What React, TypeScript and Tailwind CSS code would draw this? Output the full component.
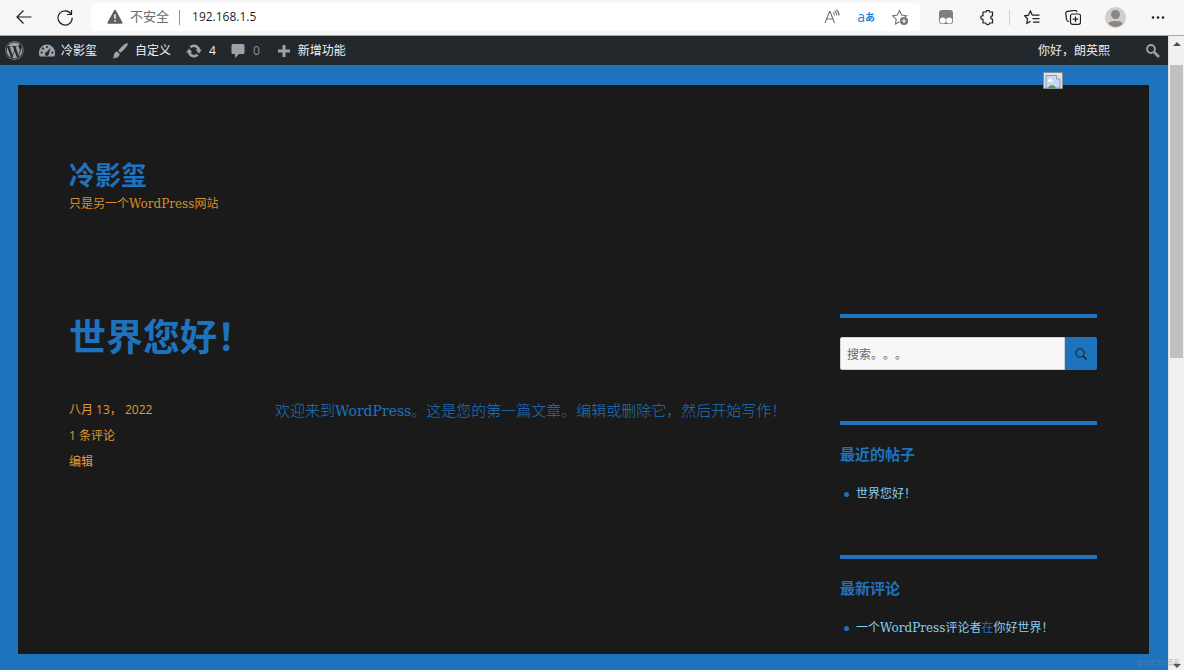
import type { ReactNode } from "react";
import { FaWordpress } from "react-icons/fa";

const post = "世界您好！";

function ToolButton({ label, className = "", children }: { label: string; className?: string; children: ReactNode }) {
  return (
    <button type="button" aria-label={label} className={`flex items-center justify-center ${className}`}>
      {children}
    </button>
  );
}

function BrowserBar() {
  return (
    <div className="flex h-9 items-center border-b border-[#a8a8a8] bg-[#f7f7f7] font-['Open_Sans','Noto_Sans_CJK_SC',sans-serif] text-[#1f1f1f]">
      <div className="flex w-[91px] shrink-0 items-center gap-[25px] pl-4">
        <ToolButton label="返回">
          <svg className="size-4" viewBox="0 0 16 16" fill="none" stroke="currentColor" strokeWidth="1.2">
            <path d="M15.500 7H1M7.500.500 1 7 7.500 13.500" />
          </svg>
        </ToolButton>
        <ToolButton label="刷新">
          <svg className="size-4" viewBox="0 0 16 16" fill="none" stroke="currentColor" strokeWidth="1.200">
            <path d="M14.200 4.300A7.100 7.100 0 1 0 15.200 7.800M14.500 0v4.500H10" />
          </svg>
        </ToolButton>
      </div>
      <div className="mb-px flex h-7 min-w-0 flex-1 items-center rounded bg-white pl-4 pr-3">
        <svg className="size-4 text-[#606060]" viewBox="0 0 16 16" fill="currentColor">
          <path d="M8 .8c.5 0 .8.300 1 .7l6.400 11.700c.4.800-.1 1.500-.9 1.500h-13c-.8 0-1.300-.7-.9-1.500L7 1.500c.2-.4.500-.7 1-.7Z" />
          <path d="M8 5.300v4.500M8 11.300v1.500" stroke="white" strokeWidth="1.400" />
        </svg>
        <span className="ml-[7px] text-[13px] text-[#6b6b6b]">不安全</span>
        <span className="mr-3 ml-2.5 h-[15px] w-px bg-[#949494]" />
        <input aria-label="地址" defaultValue="192.168.1.5" className="min-w-0 flex-1 bg-transparent text-[12px] outline-none" />
        <div className="flex items-center gap-[17px] text-[#707070]">
          <ToolButton label="大声朗读">
            <svg className="size-4" viewBox="0 0 16 16" fill="none" stroke="currentColor" strokeWidth="1.100">
              <path d="M1 14 5.500 2.500h.6L10.500 14M2.600 10h6.300M9 3.500c1 .7 1.500 1.800 1.500 3M10.500 1.800c1.700 1.100 2.300 2.700 2.300 4.700M12.300.8c2 1.500 2.700 3.500 2.700 5.700" />
            </svg>
          </ToolButton>
          <ToolButton label="翻译" className="text-[#1683d8]"><span className="text-[14px] leading-4">a</span><span className="text-[10px] leading-4 font-bold">あ</span></ToolButton>
          <ToolButton label="收藏此页">
            <svg className="size-4" viewBox="0 0 16 16" fill="none" stroke="currentColor" strokeWidth="1.100">
              <path d="m7.500 12.800-4 2.200.7-4.800L.7 6.800l4.700-.7L7.500 1.500l2.100 4.600 5 .7-2 1.500" />
              <circle cx="12" cy="12" r="4" fill="currentColor" stroke="none" />
              <path d="M12 9.800v4.400M9.800 12h4.400" stroke="white" />
            </svg>
          </ToolButton>
        </div>
      </div>
      <div className="flex shrink-0 items-center pl-[18px] pr-[19px]">
        <ToolButton label="扩展">
          <svg className="size-4" viewBox="0 0 16 16">
            <rect x="1" y="0" width="14" height="14" rx="3" fill="#808080" />
            <circle cx="4.800" cy="10.500" r="3" fill="white" />
            <circle cx="11.200" cy="10.500" r="3" fill="white" />
          </svg>
        </ToolButton>
        <ToolButton label="扩展菜单" className="ml-[25px]">
          <svg className="size-4" viewBox="0 0 16 16" fill="none" stroke="currentColor" strokeWidth="1.200" strokeLinejoin="round">
            <path d="M4 2h3c0-2.300 3.500-2.300 3.500 0h3v3.800c-2.400 0-2.400 3.400 0 3.400v3.800h-3c0 2.500-3.500 2.500-3.500 0H4V9.300c-3 0-3-3.600 0-3.600Z" />
          </svg>
        </ToolButton>
        <span className="mx-3.5 h-[15px] w-px bg-[#cfcfcf]" />
        <ToolButton label="收藏夹">
          <svg className="size-4" viewBox="0 0 16 16" fill="none" stroke="currentColor" strokeWidth="1.200">
            <path d="M9 5.200 8.200 5 6.400 1 4.500 5.200.7 5.800l2.800 3-.7 4.500 3.800-2M9 5.200h6.500M8.500 8.700h7M9 12.200h6.500" />
          </svg>
        </ToolButton>
        <ToolButton label="集锦" className="ml-[25px]">
          <svg className="size-4" viewBox="0 0 16 16" fill="none" stroke="currentColor" strokeWidth="1.200">
            <path d="M4 11.500c-1.500 0-2.200-.8-2.400-2L.8 3.700C.6 2.400 1.200 1.500 2.500 1.300l7-.9c1.300-.2 2.200.5 2.400 1.700" />
            <rect x="5.500" y="4" width="10" height="10.300" rx="2" />
            <path d="M10.500 6.500v5.400M7.800 9.200h5.400" />
          </svg>
        </ToolButton>
        <ToolButton label="个人资料" className="ml-6">
          <svg className="size-[21px]" viewBox="0 0 21 21">
            <circle cx="10.500" cy="10.500" r="10.500" fill="#d1cecb" />
            <circle cx="10.500" cy="7.500" r="4.500" fill="#8b8684" />
            <path d="M3.500 16.500c1-3.200 13-3.200 14 0-3.500 4.500-10.500 4.500-14 0Z" fill="#8b8684" />
          </svg>
        </ToolButton>
        <ToolButton label="更多" className="ml-[25px]">
          <svg className="h-4 w-3.5" viewBox="0 0 14 16" fill="currentColor">
            <circle cx="2" cy="7.500" r="1.300" /><circle cx="7" cy="7.500" r="1.300" /><circle cx="12" cy="7.500" r="1.300" />
          </svg>
        </ToolButton>
      </div>
    </div>
  );
}

function AdminBar() {
  return (
    <nav className="flex h-[29px] items-center bg-[#23282d] pl-[5px] pr-2 text-[12px] text-[#f0f0f1] font-['Open_Sans','Noto_Sans_CJK_SC',sans-serif]">
      <a href="#wordpress" aria-label="WordPress" className="text-[#9ca2a7]"><FaWordpress className="size-[19px]" /></a>
      <a href="#site" className="ml-[15px] flex items-center gap-1.5">
        <svg className="size-4 text-[#9ca2a7]" viewBox="0 0 20 20" fill="currentColor">
          <path d="M1 17C0 15.500 0 13.500 0 12a10 10 0 0 1 20 0c0 1.500 0 3.500-1 5Z" />
          <g fill="#23282d"><circle cx="10" cy="5" r="1.300" /><circle cx="5" cy="7" r="1.300" /><circle cx="3.300" cy="12" r="1.300" /><circle cx="16.700" cy="12" r="1.300" /><path d="m14.500 5.500-2.300 8.500a2.400 2.400 0 1 1-2.700-2.500Z" /></g>
        </svg>
        冷影玺
      </a>
      <a href="#customize" className="ml-[15px] flex items-center gap-[7px]">
        <svg className="size-4 text-[#9ca2a7]" viewBox="0 0 20 20" fill="currentColor">
          <path d="M19.500.5c1 1-.2 3-2.500 5.500-2 2.300-4.500 5-6.500 6.300L7.800 9.600C9.500 7 12.200 4.500 14.500 2.500 17 .5 18.700-.3 19.500.5ZM6.800 10.600l2.700 2.700c.4 4-3.500 5.700-9 6.200 2.500-2 1.500-3.500 2.200-5.700.6-2 2-3.200 4.100-3.200Z" />
        </svg>
        自定义
      </a>
      <a href="#updates" className="ml-[15px] flex items-center gap-[7px]">
        <svg className="size-4 text-[#9ca2a7]" viewBox="0 0 20 20" fill="currentColor">
          <path d="M10 1.800c4 0 7 2.700 7.700 6.200H20l-4 5-4-5h2.300a4.600 4.600 0 0 0-7.600-1.500L4.400 4.300A7.800 7.800 0 0 1 10 1.800ZM4 7l4 5H5.700a4.600 4.600 0 0 0 7.600 1.500l2.300 2.200A7.800 7.800 0 0 1 2.300 12H0Z" />
        </svg>
        4
      </a>
      <a href="#comments" className="ml-[15px] flex items-center gap-2 text-[#8d9399]">
        <svg className="size-3.5 text-[#9ca2a7]" viewBox="0 0 14 14" fill="currentColor">
          <path d="M2 0h10a1.500 1.500 0 0 1 1.500 1.500v7A1.500 1.500 0 0 1 12 10H8L4 14v-4H2A1.500 1.500 0 0 1 .5 8.500v-7A1.500 1.500 0 0 1 2 0Z" />
        </svg>
        0
      </a>
      <a href="#new" className="ml-[18px] flex items-center gap-2">
        <svg className="size-3 text-[#9ca2a7]" viewBox="0 0 12 12" fill="currentColor"><path d="M4.500 0h3v4.500H12v3H7.500V12h-3V7.500H0v-3h4.500Z" /></svg>
        新增功能
      </a>
      <a href="#account" className="ml-auto">你好，朗英熙</a>
      <button type="button" aria-label="搜索" className="ml-9 text-[#9ca2a7]">
        <svg className="size-3.5" viewBox="0 0 14 14" fill="none" stroke="currentColor">
          <circle cx="5" cy="5" r="3.900" strokeWidth="2" /><path d="m8 8 5 5" strokeWidth="2.500" />
        </svg>
      </button>
    </nav>
  );
}

function Widget({ title, children }: { title?: string; children: ReactNode }) {
  return (
    <section className="border-t-4 border-[#1e73be] pt-[19px]">
      {title && <h2 className="mb-5 text-[15px] leading-5 font-bold font-['Noto_Sans_CJK_SC',sans-serif]">{title}</h2>}
      {children}
    </section>
  );
}

function WidgetItem({ children }: { children: ReactNode }) {
  return (
    <li className="flex items-center">
      <span className="mr-[7px] ml-1 size-[5px] rounded-full bg-[#1e73be]" />
      <p>{children}</p>
    </li>
  );
}

function BrokenImage() {
  return (
    <svg className="absolute right-[105px] top-[7px] h-[17px] w-5" viewBox="0 0 20 17">
      <path d="M.5.500h19v16H.5Z" fill="#e3e3e3" stroke="#8b8b8b" />
      <path d="M3 16V3.500h10.500L17 7v9Z" fill="#c4d8f8" stroke="#8b98ae" />
      <path d="M13.500 3.500V7H17" fill="white" stroke="#8b98ae" />
      <path d="M4.500 9.500c.5-2 2-1.500 2.500-2.500 1.500-.5 2 .8 2 1.500 1 0 1.500.5 1.500 1Z" fill="white" />
      <path d="M5 16c2-4 6-4 8 0Z" fill="#4faa35" />
    </svg>
  );
}

function Scrollbar() {
  return (
    <div aria-hidden="true" className="relative flex w-4 shrink-0 flex-col items-center border-l border-[#dedede] bg-[#f1f1f1]">
      <svg className="mt-1.5 mb-[19px] h-1 w-2" viewBox="0 0 8 4" fill="#505050"><path d="m0 4 4-4 4 4Z" /></svg>
      <div className="h-[293px] w-[13px] bg-[#c1c1c1]" />
      <svg className="mt-auto mb-0.5 h-1 w-2" viewBox="0 0 8 4" fill="#505050"><path d="m0 0 4 4 4-4Z" /></svg>
      <span className="absolute right-1 bottom-0.5 text-[7px] whitespace-nowrap text-[#888888]/50 font-['Liberation_Sans','Noto_Sans_CJK_SC',sans-serif]">@51CTO博客</span>
    </div>
  );
}

const smallSerif = "text-[12px] font-normal font-['DejaVu_Serif','Noto_Sans_CJK_SC',serif]";

export default function App() {
  return (
    <div className="flex min-h-screen flex-col [text-spacing-trim:space-all]">
      <BrowserBar />
      <div className="flex flex-1">
        <div className="flex min-w-0 flex-1 flex-col">
          <AdminBar />
          <div className="relative flex flex-1 flex-col bg-[#1e73be] pt-5 pr-[19px] pb-4 pl-[18px]">
            <BrokenImage />
            <div className="flex-1 bg-[#1a1a1a] pt-[71px] pr-[52px] pb-4 pl-[51px] text-[#1e73be]">
              <header className="mb-[100px]">
                <h1 className="text-[26px] leading-9 font-bold font-['Noto_Sans_CJK_SC',sans-serif]"><a href="#home">冷影玺</a></h1>
                <p className={`mt-0.5 leading-5 text-[#d98c2b] ${smallSerif}`}>只是另一个WordPress网站</p>
              </header>
              <div className="flex items-start gap-8">
                <main className="min-w-0 flex-1">
                  <article>
                    <h2 className="mb-[41px] text-[37px] leading-[42px] font-bold font-['Noto_Sans_CJK_SC',sans-serif]"><a href="#post">{post}</a></h2>
                    <div className="flex gap-5">
                      <footer className="flex w-[186px] shrink-0 flex-col text-[12px] leading-[26px] text-[#e09a35] font-['Open_Sans','Noto_Sans_CJK_SC',sans-serif]">
                        <a href="#date">八月 13， 2022</a>
                        <a href="#comments">1 条评论</a>
                        <a href="#edit">编辑</a>
                      </footer>
                      <p className="min-w-0 text-[15px] leading-7 font-light font-['DejaVu_Serif','Noto_Sans_CJK_SC',serif]">欢迎来到<span className="text-[14px]">WordPress</span>。这是您的第一篇文章。编辑或删除它，然后开始写作！</p>
                    </div>
                  </article>
                </main>
                <aside className="flex w-[257px] shrink-0 flex-col gap-[51px]">
                  <Widget>
                    <form className="flex h-[33px]" role="search">
                      <input aria-label="搜索" placeholder="搜索。。。" className="min-w-0 flex-1 rounded-l-xs border border-[#d1d1d1] bg-[#f7f7f7] px-1.5 text-[12px] text-[#1a1a1a] outline-none placeholder:text-[#686868] font-['Noto_Sans_CJK_SC',sans-serif]" />
                      <button type="button" aria-label="搜索" className="flex w-8 items-center justify-center rounded-r-xs bg-[#1e73be] text-[#1a1a1a]">
                        <svg className="size-3" viewBox="0 0 12 12" fill="none" stroke="currentColor"><circle cx="5" cy="5" r="4.200" /><path d="m8 8 3.500 3.500" strokeWidth="1.500" /></svg>
                      </button>
                    </form>
                  </Widget>
                  <Widget title="最近的帖子">
                    <ul className={`leading-5 ${smallSerif}`}>
                      <WidgetItem><a href="#post" className="text-[#88cfef]">{post}</a></WidgetItem>
                    </ul>
                  </Widget>
                  <Widget title="最新评论">
                    <ul className={`leading-5 ${smallSerif}`}>
                      <WidgetItem><a href="#author" className="text-[#88cfef]">一个WordPress评论者</a>在<a href="#post" className="text-[#88cfef]">你好世界！</a></WidgetItem>
                    </ul>
                  </Widget>
                </aside>
              </div>
            </div>
          </div>
        </div>
        <Scrollbar />
      </div>
    </div>
  );
}
